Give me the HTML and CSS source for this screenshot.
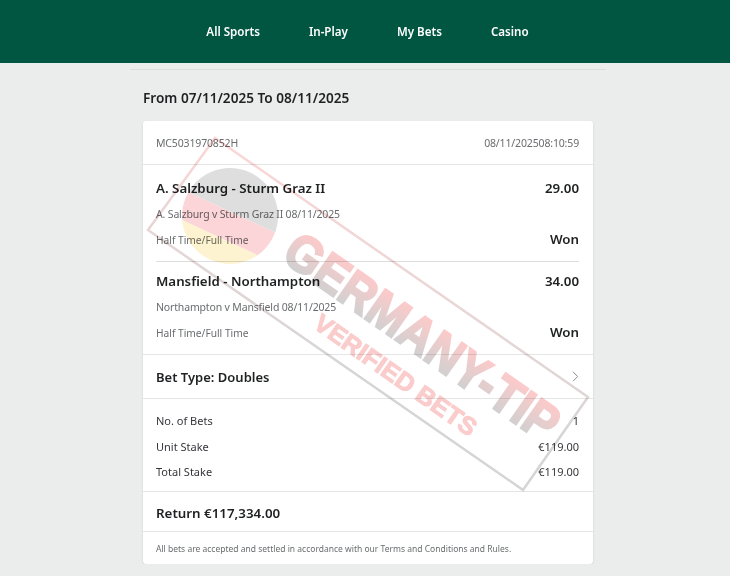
FILE: index.html
```html
<!DOCTYPE html>
<html lang="en">
<head>
<meta charset="utf-8"/>
<title>Bet history</title>
<link rel="stylesheet" href="styles.css">
</head>
<body>

<nav class="topnav">
  <a href="#">All Sports</a>
  <a href="#">In-Play</a>
  <a href="#">My Bets</a>
  <a href="#">Casino</a>
</nav>

<main class="page">
  <h1 class="range">From 07/11/2025 To 08/11/2025</h1>

  <section class="card">
    <div class="card-head">
      <span>MC5031970852H</span>
      <span class="stamp-time"><span>08/11/2025</span><span>08:10:59</span></span>
    </div>

    <div class="legs">
      <div class="leg">
        <div class="leg-row"><strong>A. Salzburg - Sturm Graz II</strong><strong>29.00</strong></div>
        <div class="leg-event">A. Salzburg v Sturm Graz II 08/11/2025</div>
        <div class="leg-row leg-market"><span>Half Time/Full Time</span><strong>Won</strong></div>
      </div>
      <div class="leg">
        <div class="leg-row"><strong>Mansfield - Northampton</strong><strong>34.00</strong></div>
        <div class="leg-event">Northampton v Mansfield 08/11/2025</div>
        <div class="leg-row leg-market"><span>Half Time/Full Time</span><strong>Won</strong></div>
      </div>
    </div>

    <div class="bet-type">
      <strong>Bet Type: Doubles</strong>
      <svg width="7" height="11" viewBox="0 0 7 11"><path d="M1 .8 5.6 5.5 1 10.2" fill="none" stroke="#8a8e8f" stroke-width="1"/></svg>
    </div>

    <div class="stakes">
      <div><span>No. of Bets</span><span>1</span></div>
      <div><span>Unit Stake</span><span>€119.00</span></div>
      <div><span>Total Stake</span><span>€119.00</span></div>
    </div>

    <div class="return"><strong>Return €117,334.00</strong></div>

    <div class="terms">All bets are accepted and settled in accordance with our Terms and Conditions and Rules.</div>
  </section>
</main>

<!-- watermark lies over the whole card -->
<svg class="watermark" width="730" height="576" viewBox="0 0 730 576">
  <defs>
    <linearGradient id="edge" gradientUnits="userSpaceOnUse" x1="300" y1="170" x2="250" y2="345">
      <stop offset="0" stop-color="#fbd6d6"/>
      <stop offset="1" stop-color="#d5d5d5"/>
    </linearGradient>
    <linearGradient id="word" gradientUnits="userSpaceOnUse" x1="0" y1="-36" x2="0" y2="2">
      <stop offset="0" stop-color="#fccaca"/>
      <stop offset="1" stop-color="#d0d0d0"/>
    </linearGradient>
    <clipPath id="flag"><circle cx="230" cy="216" r="48"/></clipPath>
  </defs>

  <g clip-path="url(#flag)">
    <g transform="rotate(25 230 216)">
      <rect x="170" y="160" width="120" height="52" fill="#dedede"/>
      <rect x="170" y="212" width="120" height="28" fill="#fbd5d8"/>
      <rect x="170" y="240" width="120" height="30" fill="#fdf3d0"/>
    </g>
  </g>

  <polygon points="215,138 588,397 523,490 148,230" fill="none" stroke="url(#edge)" stroke-width="2.5"/>

  <g transform="translate(280 259) rotate(35)">
    <text class="wm-main" fill="url(#word)" stroke="url(#word)" textLength="322" lengthAdjust="spacingAndGlyphs">GERMANY-TIP</text>
  </g>
  <g transform="translate(312 327) rotate(35)">
    <text class="wm-sub" textLength="192" lengthAdjust="spacingAndGlyphs">VERIFIED BETS</text>
  </g>
</svg>

</body>
</html>
```

FILE: styles.css
```css
body {
  margin: 0;
  background: #ebecec;
  color: #1f2021;
  font: 12px "Noto Sans", sans-serif;
  position: relative;
}
strong {
  font-weight: 600;
}
.topnav {
  height: 63px;
  background: #005641;
  display: flex;
  justify-content: center;
  align-items: center;
  gap: 49px;
  padding-left: 5px;
}
.topnav a {
  color: #fff;
  font-size: 11.6px;
  font-weight: 600;
  text-decoration: none;
}
.page {
  width: 450px;
  margin-left: 143px;
  padding-top: 6px;
}
.range {
  margin: 0 -13px;
  padding: 19px 0 0 13px;
  border-top: 1px solid #dcdddd;
  font-size: 13.6px;
  font-weight: 600;
  line-height: 18px;
  height: 32px;
}
.card {
  background: #fff;
  border-radius: 3px;
  box-shadow: 0 1px 2px rgba(0, 0, 0, 0.15);
}
.card-head {
  height: 43px;
  padding: 0 14px 0 13px;
  display: flex;
  justify-content: space-between;
  align-items: center;
  color: #6a6c6e;
  font-size: 10.5px;
  letter-spacing: -0.15px;
  border-bottom: 1px solid #e4e5e5;
}
.stamp-time {
  display: flex;
}
.legs {
  padding: 0 14px 0 13px;
  border-bottom: 1px solid #e4e5e5;
}
.leg {
  height: 96px;
  padding-top: 13px;
  box-sizing: border-box;
}
.leg + .leg {
  height: 93px;
  padding-top: 9px;
  border-top: 1px solid #dcdddd;
}
.leg-row {
  display: flex;
  justify-content: space-between;
  align-items: center;
  font-size: 13.3px;
  line-height: 20px;
}
.leg-event {
  color: #6a6c6e;
  font-size: 10.5px;
  letter-spacing: -0.16px;
  line-height: 16px;
  margin-top: 8px;
}
.leg-market {
  margin-top: 8px;
  color: #6a6c6e;
  font-size: 10.2px;
}
.leg-market strong {
  color: #1f2021;
  font-size: 13.3px;
  margin-top: -3px;
}
.bet-type {
  height: 43px;
  padding: 0 14px 0 13px;
  display: flex;
  justify-content: space-between;
  align-items: center;
  font-size: 13px;
  border-bottom: 1px solid #e4e5e5;
}
.stakes {
  padding: 9px 14px 6.5px 13px;
  border-bottom: 1px solid #e4e5e5;
}
.stakes div {
  display: flex;
  justify-content: space-between;
  height: 25.5px;
  align-items: center;
  font-size: 11px;
  color: #34363a;
}
.return {
  height: 37px;
  padding: 2px 14px 0 13px;
  display: flex;
  align-items: center;
  font-size: 13.35px;
  border-bottom: 1px solid #e4e5e5;
}
.terms {
  height: 32px;
  padding: 0 14px 0 13px;
  display: flex;
  align-items: center;
  font-size: 8.5px;
  color: #6a6c6e;
}
.watermark {
  position: absolute;
  top: 0;
  left: 0;
  pointer-events: none;
  mix-blend-mode: multiply;
}
.wm-main {
  font: 700 52px "Liberation Sans", sans-serif;
  stroke-width: 2.4px;
}
.wm-sub {
  font: 700 25px "Liberation Sans", sans-serif;
  fill: #fbcccc;
  stroke: #fbcccc;
  stroke-width: 1px;
}
```
